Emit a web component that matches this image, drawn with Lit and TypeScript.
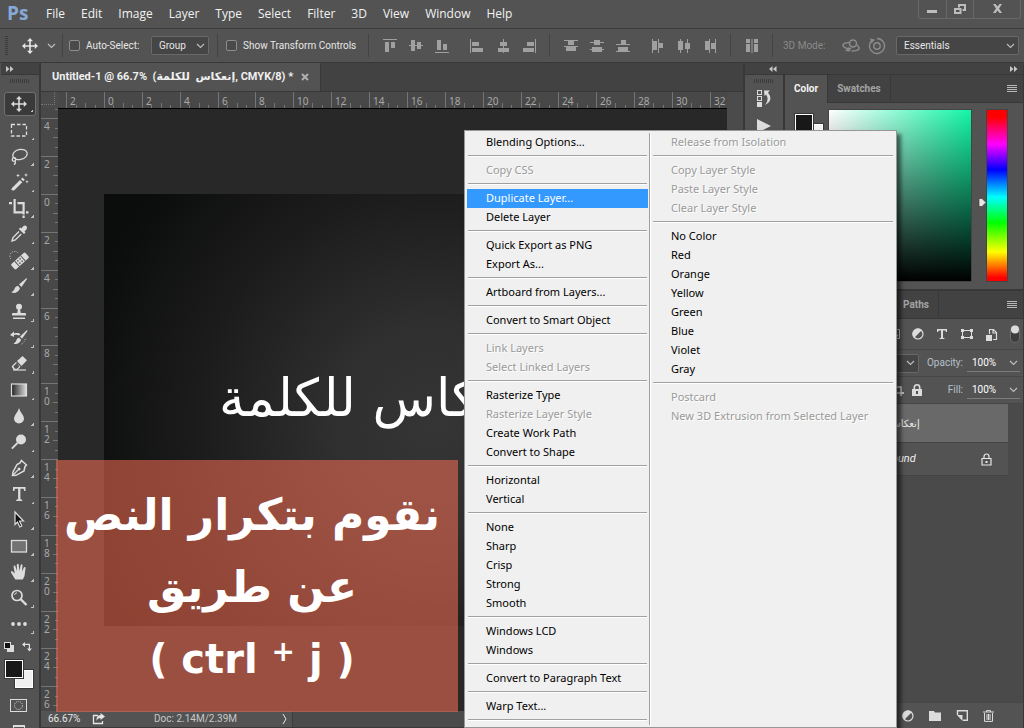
import { LitElement, html, svg, css, nothing } from "lit";
import { customElement, state } from "lit/decorators.js";
import { classMap } from "lit/directives/class-map.js";

type Glyph = ReturnType<typeof svg>;

const icon = (w: number, h: number, body: Glyph, cls = "") =>
  html`<svg class=${cls} width=${w} height=${h} viewBox="0 0 ${w} ${h}" aria-hidden="true">${body}</svg>`;

const movePath = svg`<path d="M8 0l3 3.2H8.8V7.2h4V5L16 8l-3.2 3V8.8h-4v4H11L8 16l-3-3.2h2.2v-4h-4V11L0 8l3.2-3v2.2h4v-4H5z"/>`;
const chevron = () => icon(9, 6, svg`<path d="M1 1l3.500 3.500L8 1" fill="none" stroke="currentColor" stroke-width="1.200"/>`, "chev");

const tools: [string, Glyph][] = [
  ["Move", svg`<g transform="translate(2 2)">${movePath}</g>`],
  ["Marquee", svg`<rect x="2.500" y="4.500" width="15" height="11.500" fill="none" stroke="currentColor" stroke-width="1.300" stroke-dasharray="3.500 2"/>`],
  ["Lasso", svg`<g fill="none" stroke="currentColor" stroke-width="1.300"><ellipse cx="11" cy="8.500" rx="7.300" ry="5" transform="rotate(-12 11 8.500)"/><circle cx="5" cy="13.500" r="1.800"/><path d="M6 15c.8 1.500 0 3-1 3.800"/></g>`],
  ["Magic Wand", svg`<path d="M3 16L11 8l2.300 2.300L5.300 18.300Q3 19 2.300 17.500z"/><path d="M12 7l1.500-1.500 2.300 2.300L14.300 9.300z"/><path d="M9 1.500l.6 1.400 1.400.6-1.400.6L9 5.500l-.6-1.400L7 3.500l1.400-.6zM17 1l.6 1.400 1.400.6-1.400.6L17 5l-.6-1.400L15 3l1.400-.6zM18 8l.5 1.200 1.200.5-1.200.5L18 11.500l-.5-1.300-1.200-.5 1.200-.5z"/>`],
  ["Crop", svg`<path d="M0 4h3v2.200H0zM4.500 1h2.200v12.300H15v2.200H4.500zM8.500 4H15.700v12.500h-2.200V6.200h-5zM13.500 17.500h2.200V20h-2.200zM17 13.300h2.500v2.200H17z"/>`],
  ["Eyedropper", svg`<path d="M14 2.500q2-1.800 3.500-.3t-.3 3.600L15.500 7.500l1 1-1.500 1.500L9.800 5l1.500-1.500 1 1z"/><path d="M10 7.500L4 13.500l-1 3.500 3.300-1 6-6" fill="none" stroke="currentColor" stroke-width="1.400"/>`],
  ["Healing Brush", svg`<g transform="rotate(-42 11 11)"><rect x="1.500" y="7.500" width="19" height="7" rx="1.500"/><path d="M7 7.500v7M15 7.500v7" stroke="#535353"/><circle cx="9.500" cy="9.500" r=".8" fill="#535353"/><circle cx="12.500" cy="9.500" r=".8" fill="#535353"/><circle cx="9.500" cy="12.500" r=".8" fill="#535353"/><circle cx="12.500" cy="12.500" r=".8" fill="#535353"/></g><path d="M2 9A4.500 4.500 0 019 3" fill="none" stroke="currentColor" stroke-dasharray="1 1.500"/>`],
  ["Brush", svg`<path d="M17.500 2L10 8.500l2.500 2.500L18 3zM9 9.800c-2 .3-3 1.700-3.500 3.200S3.500 16 2.300 16.300c2.500 1.400 7 .7 8.700-4z"/>`],
  ["Clone Stamp", svg`<circle cx="10" cy="4.800" r="3"/><path d="M9 7h2l.8 4H16q1 0 1 1v1.500H3V12q0-1 1-1h4.200zM4 15.500h12V17H4z"/>`],
  ["History Brush", svg`<path d="M18 2l-7 6.500 2 2.300L18.500 3zM10.300 9.800c-2 .3-2.600 1.400-3 2.700S5.500 15 4.500 15.500c2.300 1.200 6 .5 7.600-3.500zM1 7l4-3.500V5.500c3-.8 5-.6 6.500.8L10 7.500C8.500 6.500 7 6.500 5 7v2z"/><path d="M12.500 16q3-1.500 4-5.500" fill="none" stroke="currentColor" stroke-dasharray="1 1.800"/>`],
  ["Eraser", svg`<path d="M8 7l5.500-5L18 6.200 12.500 12zM7 8l4.500 4.700L8.500 16H5.200L3 13.500q-.6-1 .2-1.800zM8 8.700L4.300 12.500 6 14.800h2l2.200-2.300z" fill-rule="evenodd"/><path d="M4 16h13" stroke="currentColor" stroke-width="1.200"/>`],
  ["Gradient", svg`<defs><linearGradient id="ramp"><stop offset="0" stop-color="#222"/><stop offset="1" stop-color="#ddd"/></linearGradient></defs><rect x="2.500" y="4" width="15" height="12" fill="url(#ramp)" stroke="currentColor" stroke-width="1.200"/>`],
  ["Blur", svg`<path d="M10 2q.6 2.500 3 5.800 2 2.700 2 4.700a5 5 0 01-10 0q0-2 2-4.700Q9.400 4.500 10 2z"/>`],
  ["Dodge", svg`<circle cx="12" cy="7.500" r="5"/><path d="M8.500 11L2.800 16.700" stroke="currentColor" stroke-width="1.800"/>`],
  ["Pen", svg`<path d="M12.500 2.500l5 4.500-1.500 1.500-1 4.500-8 4.300-3.500.2.500-3.500L8 6.500l3-1.500z" fill="none" stroke="currentColor" stroke-width="1.500"/><path d="M4 17l5-5" stroke="currentColor" stroke-width="1.200"/><circle cx="10" cy="11" r="1.500"/>`],
  ["Type", svg`<path d="M4 3h12.500v4h-1.300l-.6-2.200h-3.200v10.500l1.800.5V17H7.300v-1.200l1.800-.5V4.800H5.900L5.300 7H4z"/>`],
  ["Path Selection", svg`<path d="M6 2l8.500 9h-4l2.300 5-2 1-2.300-5L6 14.500z" fill="#111" stroke="currentColor" stroke-width="1.200"/>`],
  ["Rectangle", svg`<rect x="2.500" y="4.500" width="15" height="11.500" fill="#727272" stroke="currentColor" stroke-width="1.300"/>`],
  ["Hand", svg`<path d="M6.300 17.500L2 10.500q-.4-1.500 1-1.500l2.800 2.500L4.600 4.800q0-1.500 1.500-1.200L8 9l-.2-6.500q1-1.600 1.900 0L10.500 9l1.200-6.200q1.200-1.200 1.800.2L13 9.500l2-4.300q1.300-.8 1.600.6L15.500 14l-1.700 3.500z"/>`],
  ["Zoom", svg`<circle cx="8" cy="7.500" r="5" fill="none" stroke="currentColor" stroke-width="1.700"/><path d="M5.500 7Q6 5 8 4.800" stroke="currentColor" fill="none"/><path d="M11.500 11l6 6" stroke="currentColor" stroke-width="2.400"/>`],
  ["More", svg`<circle cx="4" cy="10" r="1.900"/><circle cx="10" cy="10" r="1.900"/><circle cx="16" cy="10" r="1.900"/>`],
];

const alignGroups: Glyph[][] = [
  [
    svg`<path d="M0 0h14v1H0zM2 3h4v10H2zM8 3h4v6H8z"/>`,
    svg`<path d="M0 6h14v1H0zM2 1h4v11H2zM8 3h4v7H8z"/>`,
    svg`<path d="M0 13h14v1H0zM2 1h4v10H2zM8 5h4v6H8z"/>`,
  ],
  [
    svg`<path d="M0 0h1v14H0zM2 3h7v4H2zM2 9h11v4H2z"/>`,
    svg`<path d="M7 0h1v14H7zM4 3h7v4H4zM2 9h11v4H2z"/>`,
    svg`<path d="M13 0h1v14h-1zM5 3h7v4H5zM1 9h11v4H1z"/>`,
  ],
  [
    svg`<path d="M0 1h14v1H0zM4 2h6v4H4zM0 7h14v1H0zM2 8h10v4H2z"/>`,
    svg`<path d="M0 3h14v1H0zM4 1h6v5H4zM0 10h14v1H0zM2 8h10v5H2z"/>`,
    svg`<path d="M0 5h14v1H0zM5 1h5v4H5zM0 12h14v1H0zM2 8h10v4H2z"/>`,
  ],
  [
    svg`<path d="M1 0h1v14H1zM2 2h4v9H2zM7 0h1v14H7zM8 4h4v5H8z"/>`,
    svg`<path d="M3 0h1v14H3zM1 2h5v9H1zM10 0h1v14h-1zM8 4h5v6H8z"/>`,
    svg`<path d="M6 0h1v14H6zM2 2h4v9H2zM12 0h1v14h-1zM8 4h4v6H8z"/>`,
  ],
];

interface Entry { label: string; off?: boolean }
const on = (...l: string[]): Entry[] => l.map((label) => ({ label }));
const off = (...l: string[]): Entry[] => l.map((label) => ({ label, off: true }));

const leftMenu: Entry[][] = [
  on("Blending Options..."),
  off("Copy CSS"),
  on("Duplicate Layer...", "Delete Layer"),
  on("Quick Export as PNG", "Export As..."),
  on("Artboard from Layers..."),
  on("Convert to Smart Object"),
  off("Link Layers", "Select Linked Layers"),
  [...on("Rasterize Type"), ...off("Rasterize Layer Style"), ...on("Create Work Path", "Convert to Shape")],
  on("Horizontal", "Vertical"),
  on("None", "Sharp", "Crisp", "Strong", "Smooth"),
  on("Windows LCD", "Windows"),
  on("Convert to Paragraph Text"),
  on("Warp Text..."),
  [],
];
const rightMenu: Entry[][] = [
  off("Release from Isolation"),
  off("Copy Layer Style", "Paste Layer Style", "Clear Layer Style"),
  on("No Color", "Red", "Orange", "Yellow", "Green", "Blue", "Violet", "Gray"),
  off("Postcard", "New 3D Extrusion from Selected Layer"),
];

@customElement("layer-menu")
class LayerMenu extends LitElement {
  @state() private active = "Duplicate Layer...";

  static styles = css`
    :host {
      display: grid;
      grid-template-columns: 181px 1fr;
      column-gap: 4px;
      box-sizing: border-box;
      padding: 2px;
      background: #f0f0f0;
      border: 1px solid #979797;
      box-shadow: 4px 4px 4px rgba(0, 0, 0, 0.55);
      font: 11px/17px "Noto Sans", "Open Sans", sans-serif;
    }
    .col { display: flex; flex-direction: column; }
    .first { position: relative; }
    .first::after {
      content: "";
      position: absolute;
      top: 0;
      bottom: 0;
      left: calc(100% + 1px);
      width: 1px;
      background: #a0a0a0;
      box-shadow: 1px 0 #fff;
    }
    .item {
      height: 19px;
      padding: 0 19px 2px;
      border: 0;
      background: none;
      color: #000;
      font: inherit;
      text-align: left;
      white-space: nowrap;
    }
    .item:disabled { color: #9a9a9a; text-shadow: 1px 1px #fff; }
    .item.active { background: #3399ff; color: #fff; }
    .sep {
      height: 1px;
      margin: 3px 1px 4px;
      border: 0;
      background: #a0a0a0;
      border-bottom: 1px solid #fff;
    }
  `;

  private column(groups: Entry[][]) {
    return groups.map((g, i) => html`
      ${i ? html`<hr class="sep" />` : nothing}
      ${g.map((e) => html`<button
        role="menuitem"
        class=${classMap({ item: true, active: e.label === this.active })}
        ?disabled=${!!e.off}
        @mouseenter=${() => { this.active = e.label; }}
      >${e.label}</button>`)}`);
  }

  render() {
    return html`
      <div class="col first" role="menu">${this.column(leftMenu)}</div>
      <div class="col" role="menu">${this.column(rightMenu)}</div>`;
  }
}

const STEP = 1136 / 120; // distance between two neighbouring ticks

@customElement("ruler-strip")
class RulerStrip extends LitElement {
  static properties = { vertical: { type: Boolean }, origin: { type: Number } };
  declare vertical: boolean;
  declare origin: number;

  static styles = css`
    :host { display: block; overflow: hidden; min-width: 0; min-height: 0; background: #484848; color: #a8a8a8; }
    svg { display: block; width: 100%; height: 100%; overflow: hidden; }
    text { font: 10px "Noto Sans", sans-serif; fill: currentColor; }
    .tick { fill: #757575; }
  `;

  render() {
    const marks: Glyph[] = [];
    const last = this.vertical ? 62 : 70;
    for (let i = -9; i < last; i++) {
      const p = Math.round(this.origin + i * STEP);
      if (p < 0) continue;
      const len = i % 4 === 0 ? 17 : i % 2 === 0 ? 5 : 3;
      marks.push(this.vertical
        ? svg`<rect class="tick" x=${17 - len} y=${p} width=${len} height="1"/>`
        : svg`<rect class="tick" x=${p} y=${16 - len} width="1" height=${len}/>`);
      if (i % 4 === 0) {
        const label = String(Math.abs(i / 2));
        if (this.vertical) {
          [...label].forEach((d, n) => marks.push(svg`<text x="3" y=${p + 12 + n * 10}>${d}</text>`));
        } else {
          marks.push(svg`<text x=${p + 4} y="13">${label}</text>`);
        }
      }
    }
    return html`<svg>${marks}</svg>`;
  }
}

@customElement("app-root")
class AppRoot extends LitElement {
  static styles = css`
    :host {
      display: flex;
      flex-direction: column;
      position: relative;
      height: 100vh;
      overflow: hidden;
      background: #383838;
      color: #e6e6e6;
      font: 10px/14px Roboto, "Noto Sans", sans-serif;
    }
    * { box-sizing: border-box; }
    svg { display: block; flex: none; fill: currentColor; }
    button, select, input { font: inherit; color: inherit; }
    button { border: 0; padding: 0; background: none; }

    .menubar { display: flex; align-items: stretch; height: 29px; background: #535353; border-bottom: 1px solid #3a3a3a; }
    .logo { width: 38px; padding-left: 7px; color: #86a9d8; font: 700 19px/26px "Open Sans", sans-serif; }
    .menu { padding: 0 8px; font: 12px/28px "Open Sans", sans-serif; color: #f2f2f2; }
    .winbtns { display: flex; margin: 0 3px 0 auto; height: 19px; border: 1px solid #686868; border-top: 0; border-radius: 0 0 3px 3px; color: #bdbdbd; }
    .winbtn { display: grid; place-items: center; width: 27px; }
    .winbtn + .winbtn { border-left: 1px solid #686868; }
    .close { width: 47px; }

    .options { display: flex; align-items: center; height: 34px; padding: 0 5px; background: #535353; border-bottom: 1px solid #383838; }
    .grip { flex: none; width: 3px; height: 19px; background: repeating-linear-gradient(#3c3c3c 0 1px, transparent 1px 2px); }
    .grip-h { width: 20px; height: 4px; background: repeating-linear-gradient(90deg, #3c3c3c 0 1px, transparent 1px 2px); }
    .movebtn { display: flex; align-items: center; gap: 9px; width: 54px; padding-left: 14px; }
    .chev { color: #bcbcbc; }
    .sep { flex: none; width: 1px; height: 23px; background: #444; }
    .check { display: flex; align-items: center; gap: 6px; white-space: nowrap; }
    .check input { appearance: none; width: 11px; height: 11px; margin: 0; border: 1px solid #8c8c8c; border-radius: 2px; background: #4a4a4a; }
    .auto { width: 82px; margin-left: 6px; }
    .show { width: 142px; margin-left: 8px; }
    .pick { display: grid; align-items: center; }
    .pick > * { grid-area: 1 / 1; }
    .pick .chev { justify-self: end; margin-right: 4px; pointer-events: none; }
    .pick select { appearance: none; width: 100%; height: 19px; padding: 0 7px; border: 1px solid #686868; border-radius: 2px; background: #454545; outline: 0; }
    .group { width: 58px; margin-right: 8px; }
    .work { width: 123px; margin-left: auto; }
    .aligns { display: flex; margin-left: 8px; color: #a0a0a0; }
    .aligns + .aligns { margin-left: 9px; }
    .aligns + .sep { margin-left: 7px; }
    .cell { display: grid; place-items: center; width: 26px; height: 26px; }
    .mode { margin-left: 10px; width: 55px; color: #8a8a8a; white-space: nowrap; }
    .dim { color: #8c8c8c; }

    .main { flex: 1; display: grid; grid-template-columns: 39px 1fr 279px; column-gap: 2px; min-height: 0; }
    .main > * { min-width: 0; min-height: 0; }

    .toolbox { display: flex; flex-direction: column; align-items: center; padding-left: 1px; background: #535353; overflow: hidden; color: #dcdcdc; }
    .toolbox > * { flex: none; }
    .bar { display: flex; align-items: center; flex: none; height: 12px; width: 100%; padding: 0 5px; background: #424242; border-bottom: 1px solid #383838; color: #c8c8c8; }
    .toolgrip { display: grid; place-items: center; height: 12px; margin-bottom: 4px; }
    .tool { position: relative; display: grid; place-items: center; width: 32px; height: 26px; border-radius: 3px; padding-right: 3px; }
    .tool::after { content: ""; position: absolute; right: 2px; bottom: 3px; width: 3px; height: 3px; background: linear-gradient(135deg, transparent 50%, #c0c0c0 50%); }
    .sel { background: #3a3a3a; border: 1px solid #707070; height: 24px; margin: 1px 0; }
    .minis { display: flex; gap: 8px; padding: 5px 3px 7px 0; }
    .swatches { display: grid; grid-template: 10px 20px / 10px 20px; }
    .toolbox .swatches { margin-right: 2px; }
    .fg, .bg { width: 20px; height: 20px; border: 1px solid #383838; box-shadow: inset 0 0 0 1px #fff; }
    .fg { grid-area: 1 / 1; background: #181818; z-index: 1; }
    .bg { grid-area: 2 / 2; background: #f0f0f0; }
    .masks { display: grid; gap: 12px; margin: 10px 3px 0 0; }

    .doc { display: flex; flex-direction: column; background: #4b4b4b; }
    .tabs { display: flex; flex: none; height: 29px; background: #424242; border-bottom: 1px solid #383838; }
    .tab { display: flex; align-items: center; gap: 8px; padding: 0 11px; background: #535353; border-right: 1px solid #383838; font: bold 11px/20px Roboto, "DejaVu Sans", sans-serif; white-space: pre; color: #f0f0f0; }
    .x { color: #b0b0b0; }
    .stagegrid { flex: 1; display: grid; grid-template: 16px 1fr / 17px 1fr 16px; min-height: 0; }
    .corner { background: #4b4b4b; border-right: 1px dotted #777; border-bottom: 1px dotted #777; margin: 0 3px 3px 0; }
    .vr { grid-area: 2 / 1; }
    .stage { grid-area: 2 / 2; position: relative; overflow: hidden; background: #282828; border-top: 1px solid #000; }
    .paper { position: absolute; left: 46px; top: 85px; width: 640px; height: 432px; background: radial-gradient(circle at 330px 230px, #353535 0, #2f2f2f 25%, #1b1b1b 60%, #0b0d0c 90%); }
    .art { position: absolute; left: 115px; top: 168px; color: #fff; font: 52px/72px "DejaVu Sans", sans-serif; white-space: nowrap; }
    .note { position: absolute; left: 56px; bottom: 16px; z-index: 1; width: 402px; height: 252px; margin: 0; padding: 19px 0; background: rgba(249, 111, 84, 0.55); color: #fff; font: bold 44px/72px "DejaVu Sans", sans-serif; text-align: center; }
    .line { display: block; white-space: nowrap; padding-right: 10px; }
    .keys { font-size: 40px; }
    .plus { font-size: 28px; vertical-align: 12px; line-height: 1; }
    .status { display: flex; align-items: center; flex: none; height: 17px; padding-left: 7px; background: #535353; border-bottom: 1px solid #383838; }
    .status > * { flex: none; }
    .zoom { width: 44px; }
    .info { width: 177px; padding-left: 49px; color: #c8c8c8; white-space: nowrap; }
    .status .rest { align-self: stretch; flex: 1; background: #4b4b4b; border-left: 1px solid #3c3c3c; margin-left: 4px; }

    .dock { display: grid; grid-template: 12px 1fr / 38px 1fr; column-gap: 2px; padding-right: 1px; }
    .dockbar { grid-column: 1 / 3; justify-content: space-between; padding: 0 5px 0 24px; }
    .strip { display: flex; flex-direction: column; align-items: center; background: #535353; color: #dcdcdc; }
    .strip .toolgrip { margin-bottom: 2px; }
    .play { margin-top: 12px; }
    .panels { display: flex; flex-direction: column; min-width: 0; min-height: 0; }
    .ptabs { display: flex; align-items: center; flex: none; height: 28px; background: #424242; border-bottom: 1px solid #383838; padding-right: 6px; }
    .ptab { height: 27px; padding: 0 9px; border-right: 1px solid #383838; font-weight: bold; color: #a4a4a4; }
    .cur { height: 28px; background: #535353; color: #f4f4f4; align-self: flex-start; }
    .burger { margin-left: auto; color: #b8b8b8; }
    .color { flex: none; display: grid; grid-template-columns: 35px 1fr 20px; padding: 7px 16px 8px 9px; height: 186px; background: #535353; }
    .color .swatches { margin-top: 3px; }
    .field { margin-right: 16px; background: linear-gradient(to bottom, transparent, #000), linear-gradient(to right, #fff, #12f5a6); outline: 1px solid #444; }
    .hue { position: relative; background: linear-gradient(#f00 4%, #f0f 20%, #00f 35%, #0ff 51%, #0f0 66%, #ff0 83%, #f00 98%); outline: 1px solid #444; }
    .pin { position: absolute; left: -9px; top: 87px; }
    .lower { margin-top: 2px; padding-left: 109px; }
    .row { display: flex; align-items: center; flex: none; background: #535353; border-bottom: 1px solid #474747; padding-right: 3px; justify-content: flex-end; }
    .filters { height: 31px; gap: 12px; color: #dcdcdc; }
    .opts { height: 27px; }
    .blend { width: 126px; margin-right: 8px; }
    .lab { color: #b4c0cc; margin-right: 4px; white-space: nowrap; }
    .num { display: flex; align-items: center; width: 53px; height: 18px; padding-right: 2px; border-bottom: 1px solid #7c7c7c; }
    .num input { flex: 1; min-width: 0; padding: 0 0 0 5px; border: 0; background: none; color: #fff; outline: 0; }
    .locks { display: flex; align-items: center; gap: 8px; margin-right: 26px; color: #dcdcdc; }
    .list { flex: 1; min-height: 0; padding-right: 15px; background: #4a4a4a; }
    .layer { display: flex; align-items: center; padding: 0 16px 0 74px; background: #535353; border-bottom: 1px solid #434343; height: 33px; justify-content: space-between; }
    .picked { height: 39px; padding-top: 2px; background: #696969; font-family: "DejaVu Sans", sans-serif; }
    .base { font-style: italic; font-size: 11px; color: #f0f0f0; }
    .foot { height: 26px; padding-right: 29px; gap: 15px; color: #dcdcdc; border: 0; border-top: 1px solid #474747; }

    layer-menu { position: absolute; left: 464px; top: 130px; width: 433px; z-index: 2; }
  `;

  private dbl(left = false) {
    return icon(8, 6, left
      ? svg`<path d="M3.500 0v6L0 3zM7.500 0v6L4 3z"/>`
      : svg`<path d="M0 0l3.500 3L0 6zM4 0l3.500 3L4 6z"/>`);
  }

  private burger() {
    return html`<button class="burger" aria-label="Panel menu">${icon(10, 8, svg`<path d="M0 0h10v1H0zM0 2h10v1H0zM0 4h10v1H0zM0 6h10v1H0z"/>`)}</button>`;
  }

  private num(id: string, label: string) {
    return html`<label class="lab" for=${id}>${label}</label>
      <span class="num"><input id=${id} value="100%" />${chevron()}</span>`;
  }

  private half() {
    return icon(12, 12, svg`<circle cx="6" cy="6" r="5" fill="none" stroke="currentColor" stroke-width="1.200"/><path d="M2 10A5.500 5.500 0 0110 2z"/>`);
  }

  render() {
    return html`
      <nav class="menubar">
        <span class="logo">Ps</span>
        ${["File", "Edit", "Image", "Layer", "Type", "Select", "Filter", "3D", "View", "Window", "Help"].map(
          (m) => html`<button class="menu">${m}</button>`)}
        <div class="winbtns">
          <button class="winbtn" aria-label="Minimise">${icon(11, 12, svg`<rect x="0" y="7" width="10" height="3"/>`)}</button>
          <button class="winbtn" aria-label="Restore">${icon(12, 11, svg`<path d="M4 0h8v7H8.500V5H10V2H6v1.500H4zM0 4h7.500v6H0zM2 6v2h3.500V6z" fill-rule="evenodd"/>`)}</button>
          <button class="winbtn close" aria-label="Close">${icon(11, 10, svg`<path d="M1 0h2.500l2 2.500 2-2.500H10L7 4.500 10 9H7.500l-2-2.500-2 2.500H1l3-4.500z"/>`)}</button>
        </div>
      </nav>

      <div class="options">
        <span class="grip"></span>
        <span class="movebtn">${icon(16, 16, movePath)}${chevron()}</span>
        <span class="sep"></span>
        <label class="check auto"><input type="checkbox" />Auto-Select:</label>
        <span class="pick group"><select aria-label="Auto-select target"><option>Group</option></select>${chevron()}</span>
        <span class="sep"></span>
        <label class="check show"><input type="checkbox" />Show Transform Controls</label>
        <span class="sep"></span>
        ${alignGroups.map((g, i) => html`
          <div class="aligns">${g.map((a) => html`<button class="cell" aria-label="Align">${icon(14, 14, a)}</button>`)}</div>
          ${i % 2 ? html`<span class="sep"></span>` : nothing}`)}
        <div class="aligns"><button class="cell" aria-label="Auto-align">${icon(12, 14, svg`<path d="M0 0h4v4H0zM0 5h4v8H0zM5.500 0h1v14h-1zM8 0h4v4H8zM8 5h4v8H8z"/>`)}</button></div>
        <span class="sep"></span>
        <span class="mode">3D Mode:</span>
        <button class="cell dim" aria-label="Orbit">${icon(18, 14, svg`<g fill="none" stroke="currentColor" stroke-width="1.500"><circle cx="11" cy="4.500" r="3.500"/><path d="M7 3.500Q0 4 1.200 7t8 2.500M15 6q3 3 1.500 4.500t-7 1.500"/></g><path d="M3 12l4-4 1.500 4.500z"/>`)}</button>
        <button class="cell dim" aria-label="Roll">${icon(18, 18, svg`<g fill="none" stroke="currentColor" stroke-width="1.400"><circle cx="9" cy="9" r="3.200"/><path d="M3 4.500A7.500 7.500 0 109 1.500"/></g><path d="M2 1.500l5 1-3.500 4z"/>`)}</button>
        <span class="pick work"><select aria-label="Workspace"><option>Essentials</option></select>${chevron()}</span>
      </div>

      <div class="main">
        <div class="toolbox">
          <div class="bar">${this.dbl()}</div>
          <div class="toolgrip"><span class="grip-h"></span></div>
          ${tools.map(([name, g], i) => html`<button class=${classMap({ tool: true, sel: i === 0 })} aria-label=${name}>${icon(20, 20, g)}</button>`)}
          <div class="minis">
            ${icon(10, 10, svg`<rect x="3" y="3" width="7" height="7"/><rect x=".5" y=".5" width="6" height="6" fill="#111" stroke="currentColor"/>`)}
            ${icon(11, 10, svg`<path d="M3 0v1.800h5V6.500h2L7.300 9.500 5 6.500h1.800V3H3v2L0 2.500z"/>`)}
          </div>
          <div class="swatches"><span class="fg"></span><span class="bg"></span></div>
          <div class="masks">
            ${icon(17, 13, svg`<rect x=".5" y=".5" width="16" height="12" fill="none" stroke="currentColor"/><circle cx="8.500" cy="6.500" r="4" fill="none" stroke="currentColor" stroke-dasharray="1 1"/>`)}
            ${icon(17, 13, svg`<path d="M3 1h12v2H3zM3 1h1v9H3zM14 1h1v9h-1z"/>`)}
          </div>
        </div>

        <div class="doc">
          <div class="tabs">
            <div class="tab"><span>Untitled-1 @ 66.7%  (<bdi>إنعكاس  للكلمة</bdi>, CMYK/8) *</span><button class="x" aria-label="Close tab">${icon(8, 8, svg`<path d="M1 1l6 6M7 1L1 7" stroke="currentColor" stroke-width="2"/>`)}</button></div>
          </div>
          <div class="stagegrid">
            <div class="corner"></div>
            <ruler-strip .origin=${46}></ruler-strip>
            <ruler-strip class="vr" vertical .origin=${86}></ruler-strip>
            <div class="stage"><div class="paper"><span class="art" lang="ar" dir="rtl">إنعكاس للكلمة</span></div></div>
          </div>
          <div class="status">
            <span class="zoom">66.67%</span>
            ${icon(13, 12, svg`<path d="M6 2.500H1.500v8h9V8" fill="none" stroke="currentColor" stroke-width="1.300"/><path d="M8.500 0L13 3.500 8.500 7V5Q5.500 5 4.500 8 4 2.500 8.500 2z"/>`)}
            <span class="info">Doc: 2.14M/2.39M</span>
            ${icon(6, 10, svg`<path d="M1 0l3 5-3 5" fill="none" stroke="currentColor"/>`)}
            <span class="rest"></span>
          </div>
        </div>

        <div class="dock">
          <div class="bar dockbar">${this.dbl(true)}${this.dbl()}</div>
          <div class="strip">
            <div class="toolgrip"><span class="grip-h"></span></div>
            ${icon(16, 18, svg`<path d="M1 1h5v5H1zM2 2v3h3V2zM1 7h5v5H1zM2 8v3h3V8zM1 13h5v5H1z" fill-rule="evenodd"/><path d="M8 1.500h6L12 3.500q6 8-3 12.500 4.500-5 1.200-10.500L8.500 7z"/>`)}
            ${icon(14, 14, svg`<path d="M0 0l14 7-14 7z"/>`, "play")}
          </div>
          <div class="panels">
            <div class="ptabs"><button class="ptab cur">Color</button><button class="ptab">Swatches</button>${this.burger()}</div>
            <div class="color">
              <div class="swatches"><span class="fg"></span><span class="bg"></span></div>
              <div class="field"></div>
              <div class="hue">${icon(8, 11, svg`<path d="M1 1.500h3L8 5.500l-4 4H1z" stroke="#333" stroke-width=".6"/>`, "pin")}</div>
            </div>
            <div class="ptabs lower"><button class="ptab">Paths</button>${this.burger()}</div>
            <div class="row filters">
              ${icon(12, 12, svg`<path d="M.5 1.500h11v9H.5zM3 8l2-3 2 2.500L8.500 6 10 8z" fill="none" stroke="currentColor"/>`)}
              ${this.half()}
              ${icon(12, 12, svg`<path d="M1 1h10v3H9.800L9.500 2.500H7v7.300l1.500.4V11h-5v-.8L5 9.800V2.500H2.500L2.200 4H1z"/>`)}
              ${icon(14, 12, svg`<path d="M3 2.500h8M3 9.500h8M2.500 3v6M11.500 3v6" stroke="currentColor"/><path d="M1 1h3v3H1zM10 1h3v3h-3zM1 8h3v3H1zM10 8h3v3h-3z"/>`)}
              ${icon(12, 13, svg`<path d="M3.500 6V1.500h4l3 3v7H7M7 1v4h4" fill="none" stroke="currentColor" stroke-width="1.200"/><path d="M0 7h6v6H0z"/>`)}
              ${icon(10, 18, svg`<rect x=".5" y=".5" width="9" height="17" rx="4.500" fill="#3c3c3c" stroke="#6a6a6a"/><circle cx="5" cy="4.500" r="4"/>`)}
            </div>
            <div class="row opts">
              <span class="pick blend"><select aria-label="Blend mode"><option>Normal</option></select>${chevron()}</span>
              ${this.num("opacity", "Opacity:")}
            </div>
            <div class="row opts">
              <span class="locks">
                ${icon(12, 12, svg`<path d="M3 0v9h9M0 3h9v9" fill="none" stroke="currentColor" stroke-width="1.300"/>`)}
                ${icon(10, 12, svg`<path d="M0 5h10v7H0z"/><path d="M2.300 5V3.500a2.700 2.700 0 015.400 0V5" fill="none" stroke="currentColor" stroke-width="1.600"/><rect x="4" y="7" width="2" height="3" fill="#535353"/>`)}
              </span>
              ${this.num("fill", "Fill:")}
            </div>
            <div class="list">
              <div class="layer picked"><bdi lang="ar">إنعكاس للكلمة</bdi></div>
              <div class="layer"><span class="base">Background</span>${icon(11, 13, svg`<path d="M1 5.500h9v6.500H1zM3 5.500V3.500a2.500 2.500 0 015 0v2" fill="none" stroke="currentColor" stroke-width="1.200"/><rect x="4.500" y="8" width="2" height="2"/>`)}</div>
            </div>
            <div class="row foot">
              ${this.half()}
              ${icon(12, 10, svg`<path d="M0 0h5l1 1.500h6V10H0z"/>`)}
              ${icon(12, 11, svg`<path d="M1.500 5V.7h9.800v9.600H7" fill="none" stroke="currentColor" stroke-width="1.400"/><path d="M1 5h5.500v6z"/>`)}
              ${icon(11, 12, svg`<path d="M0 2h11M3.500 2V.6h4V2M1.500 3v8.400h8V3M4 4v6M5.500 4v6M7 4v6" fill="none" stroke="currentColor"/>`)}
            </div>
          </div>
        </div>
      </div>

      <p class="note" lang="ar" dir="rtl">
        <span class="line">نقوم بتكرار النص</span>
        <span class="line">عن طريق</span>
        <span class="line keys" dir="ltr">( ctrl <span class="plus">+</span> j )</span>
      </p>
      <layer-menu></layer-menu>`;
  }
}
